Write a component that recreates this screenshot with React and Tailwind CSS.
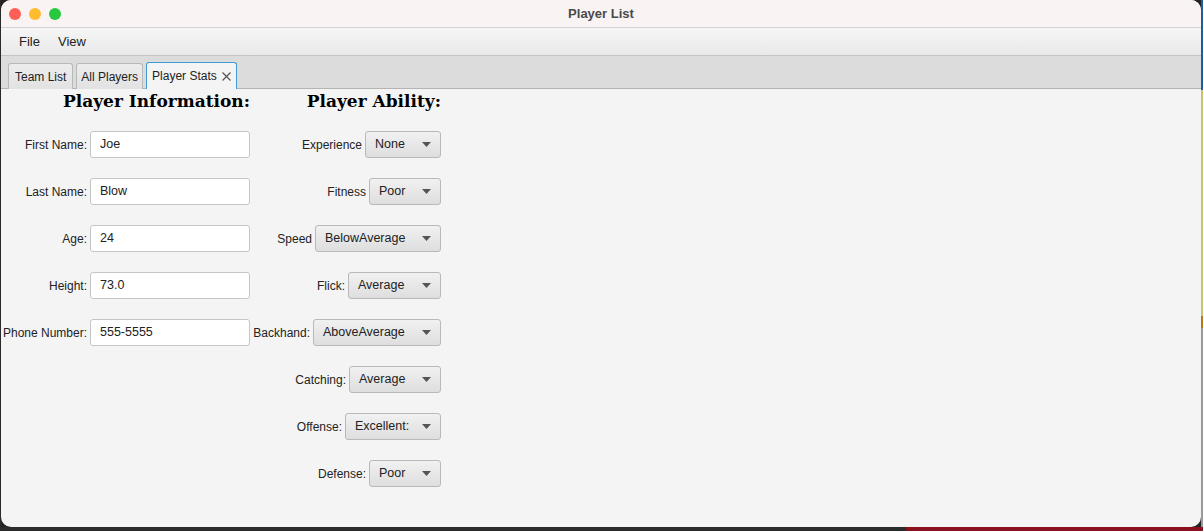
import React from "react";

const info = [
  { label: "First Name:", value: "Joe" },
  { label: "Last Name:", value: "Blow" },
  { label: "Age:", value: "24" },
  { label: "Height:", value: "73.0" },
  { label: "Phone Number:", value: "555-5555" },
];

const ability = [
  { label: "Experience", value: "None", w: "w-[76px]" },
  { label: "Fitness", value: "Poor", w: "w-[72px]" },
  { label: "Speed", value: "BelowAverage", w: "w-[126px]" },
  { label: "Flick:", value: "Average", w: "w-[93px]" },
  { label: "Backhand:", value: "AboveAverage", w: "w-[128px]" },
  { label: "Catching:", value: "Average", w: "w-[92px]" },
  { label: "Offense:", value: "Excellent:", w: "w-[96px]" },
  { label: "Defense:", value: "Poor", w: "w-[72px]" },
];

const sans = { fontFamily: '"Liberation Sans", Arial, sans-serif' };
const serif = { fontFamily: '"DejaVu Serif", Georgia, serif' };

const Combo = ({ value, w }) => (
  <div
    className={`${w} shrink-0 h-[27px] flex items-center justify-between pl-[9px] pr-[9px] rounded-[3px] border border-[#b9b9b9] bg-gradient-to-b from-[#f1f1f1] to-[#dedede] text-[12.5px] text-[#222]`}
  >
    <span className="whitespace-nowrap">{value}</span>
    <svg width="9" height="5" viewBox="0 0 9 5" className="shrink-0">
      <path d="M0 0 L9 0 L4.5 5 Z" fill="#555" />
    </svg>
  </div>
);

const App = () => {
  return (
    <div className="w-[1203px] h-[531px] bg-[#232323] flex flex-col" style={sans}>
      <div className="flex h-[527px]">
        <div className="w-[1px] bg-[#2a2a2a]" />
        <div className="w-[1200px] h-[527px] rounded-[10px] overflow-hidden bg-[#f4f4f4] flex flex-col">
          {/* title bar */}
          <div className="h-[28px] bg-[#f9f3f3] border-b border-[#d6d2d2] grid grid-cols-[1fr_auto_1fr] items-center">
            <div className="flex gap-[8px] pl-[8px]">
              <div className="w-[12px] h-[12px] rounded-full bg-[#ff5f57]" />
              <div className="w-[12px] h-[12px] rounded-full bg-[#febc2e]" />
              <div className="w-[12px] h-[12px] rounded-full bg-[#28c840]" />
            </div>
            <div className="text-[13px] font-bold text-[#4a4a4a]">Player List</div>
            <div />
          </div>

          {/* menu bar */}
          <div className="h-[28px] bg-gradient-to-b from-[#f6f6f6] to-[#e9e9e9] border-b border-[#c4c4c4] flex items-center text-[13px] text-[#222]">
            <span className="ml-[18px]">File</span>
            <span className="ml-[18px]">View</span>
          </div>

          {/* tab header */}
          <div className="h-[33px] bg-[#dcdcdc] border-b border-[#b4b4b4] flex items-end pl-[7px] gap-[3px] text-[12px] text-[#222]">
            <div className="h-[26px] px-[6px] flex items-center border border-b-0 border-[#b8b8b8] rounded-t-[3px] bg-gradient-to-b from-[#ededed] to-[#e2e2e2] -mb-px">
              Team List
            </div>
            <div className="h-[26px] px-[4px] flex items-center border border-b-0 border-[#b8b8b8] rounded-t-[3px] bg-gradient-to-b from-[#ededed] to-[#e2e2e2] -mb-px">
              All Players
            </div>
            <div className="h-[27px] px-[5px] flex items-center gap-[5px] border border-b-0 border-[#3f9bd3] rounded-t-[3px] bg-[#f4f4f4] -mb-px">
              <span>Player Stats</span>
              <svg width="9" height="9" viewBox="0 0 9 9">
                <path d="M0.5 0.5 L8.5 8.5 M8.5 0.5 L0.5 8.5" stroke="#555" strokeWidth="1.2" />
              </svg>
            </div>
          </div>

          {/* content */}
          <div className="flex-1 flex text-[12px] text-[#222]">
            <div className="w-[249px] flex flex-col">
              <div className="h-[24px] text-right text-[17px] font-bold text-black leading-[24px]" style={serif}>
                Player Information:
              </div>
              <div className="mt-[8px] flex flex-col">
                {info.map((r) => (
                  <div key={r.label} className="h-[47px] flex items-center justify-end gap-[3px]">
                    <span className="whitespace-nowrap">{r.label}</span>
                    <div className="w-[160px] shrink-0 h-[27px] bg-white border border-[#c6c6c6] rounded-[3px] flex items-center pl-[9px] text-[12.5px]">
                      {r.value}
                    </div>
                  </div>
                ))}
              </div>
            </div>
            <div className="w-[191px] flex flex-col">
              <div className="h-[24px] text-right text-[17px] font-bold text-black leading-[24px]" style={serif}>
                Player Ability:
              </div>
              <div className="mt-[8px] flex flex-col">
                {ability.map((r) => (
                  <div key={r.label} className="h-[47px] flex items-center justify-end gap-[3px]">
                    <span className="whitespace-nowrap">{r.label}</span>
                    <Combo value={r.value} w={r.w} />
                  </div>
                ))}
              </div>
            </div>
          </div>
        </div>
        <div className="w-[2px] flex flex-col">
          <div className="h-[90px] bg-[#1d5d9c]" />
          <div className="h-[226px] bg-[#c9c270]" />
          <div className="h-[12px] bg-[#b87a10]" />
          <div className="flex-1 bg-[#9a9a9a]" />
        </div>
      </div>
      <div className="h-[4px] flex">
        <div className="w-[906px] bg-[#2b2b2b]" />
        <div className="flex-1 bg-[#8a1020]" />
      </div>
    </div>
  );
};

export default App;
